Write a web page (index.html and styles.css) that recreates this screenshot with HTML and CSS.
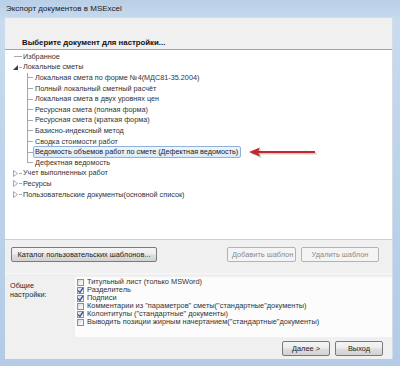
FILE: index.html
```html
<!DOCTYPE html>
<html lang="ru">
<head>
<meta charset="utf-8">
<title>Экспорт документов в MSExcel</title>
<link rel="stylesheet" href="styles.css">
</head>
<body>
<div class="window">
  <div class="titlebar">Экспорт документов в MSExcel</div>
  <div class="client">
    <div class="heading">Выберите документ для настройки...</div>
    <div class="tree">
      <div class="row top"><span class="twisty leaf"></span><span class="label">Избранное</span></div>
      <div class="row top"><span class="twisty"><svg class="tri" width="5" height="5" viewBox="0 0 5 5"><polygon points="5,0 5,5 0,5" fill="#3c3c3c"/></svg></span><span class="label">Локальные сметы</span></div>
      <div class="row child"><span class="conn"></span><span class="label">Локальная смета по форме №4(МДС81-35.2004)</span></div>
      <div class="row child"><span class="conn"></span><span class="label">Полный локальный сметный расчёт</span></div>
      <div class="row child"><span class="conn"></span><span class="label">Локальная смета в двух уровнях цен</span></div>
      <div class="row child"><span class="conn"></span><span class="label">Ресурсная смета (полная форма)</span></div>
      <div class="row child"><span class="conn"></span><span class="label">Ресурсная смета (краткая форма)</span></div>
      <div class="row child"><span class="conn"></span><span class="label">Базисно-индексный метод</span></div>
      <div class="row child"><span class="conn"></span><span class="label">Сводка стоимости работ</span></div>
      <div class="row child"><span class="conn"></span><span class="label selected">Ведомость объемов работ по смете (Дефектная ведомость)</span></div>
      <div class="row child"><span class="conn last"></span><span class="label">Дефектная ведомость</span></div>
      <div class="row top"><span class="twisty"><svg class="tri" width="5" height="7" viewBox="0 0 5 7"><polygon points="0.5,0.5 4.5,3.5 0.5,6.5" fill="#fff" stroke="#a6a6a6" stroke-width="1"/></svg></span><span class="label">Учет выполненных работ</span></div>
      <div class="row top"><span class="twisty"><svg class="tri" width="5" height="7" viewBox="0 0 5 7"><polygon points="0.5,0.5 4.5,3.5 0.5,6.5" fill="#fff" stroke="#a6a6a6" stroke-width="1"/></svg></span><span class="label">Ресурсы</span></div>
      <div class="row top"><span class="twisty"><svg class="tri" width="5" height="7" viewBox="0 0 5 7"><polygon points="0.5,0.5 4.5,3.5 0.5,6.5" fill="#fff" stroke="#a6a6a6" stroke-width="1"/></svg></span><span class="label">Пользовательские документы(основной список)</span></div>
      <svg class="arrow" width="72" height="16" viewBox="0 0 72 16">
        <g transform="translate(1.5,1.5)">
          <line x1="8" y1="6" x2="66" y2="6" stroke="#9a9a9a" stroke-width="2" stroke-opacity="0.5"/>
          <polygon points="0,6 11,1.5 9,6 11,10.5" fill="#9a9a9a" fill-opacity="0.5"/>
        </g>
        <line x1="8" y1="6" x2="66" y2="6" stroke="#c1272d" stroke-width="2"/>
        <polygon points="0,6 11,1.5 9,6 11,10.5" fill="#c1272d"/>
      </svg>
    </div>
    <div class="btnrow">
      <button class="btn catalog">Каталог пользовательских шаблонов...</button>
      <span class="spacer"></span>
      <button class="btn disabled add">Добавить шаблон</button>
      <button class="btn disabled del">Удалить шаблон</button>
    </div>
    <div class="settings">
      <div class="settings-label">Общие<br>настройки:</div>
      <div class="checklist">
        <div class="check"><span class="box"></span><span>Титульный лист (только MSWord)</span></div>
        <div class="check"><span class="box"><svg width="7" height="7" viewBox="0 0 7 7"><path d="M1 3.5 L3 5.5 L6 1" fill="none" stroke="#3d5a99" stroke-width="1.4"/></svg></span><span>Разделитель</span></div>
        <div class="check"><span class="box"><svg width="7" height="7" viewBox="0 0 7 7"><path d="M1 3.5 L3 5.5 L6 1" fill="none" stroke="#3d5a99" stroke-width="1.4"/></svg></span><span>Подписи</span></div>
        <div class="check"><span class="box"></span><span>Комментарии из "параметров" сметы("стандартные"документы)</span></div>
        <div class="check"><span class="box"><svg width="7" height="7" viewBox="0 0 7 7"><path d="M1 3.5 L3 5.5 L6 1" fill="none" stroke="#3d5a99" stroke-width="1.4"/></svg></span><span>Колонтитулы ("стандартные" документы)</span></div>
        <div class="check"><span class="box"></span><span>Выводить позиции жирным начертанием("стандартные"документы)</span></div>
      </div>
    </div>
    <div class="footer">
      <button class="btn foot">Далее &gt;</button>
      <button class="btn foot">Выход</button>
    </div>
  </div>
</div>
</body>
</html>
```

FILE: styles.css
```css
* { box-sizing: border-box; }

html, body {
  margin: 0;
  padding: 0;
  background: #ffffff;
}

body {
  font-family: "Liberation Sans", Arial, sans-serif;
  font-size: 7.6px;
  color: #2a2a2a;
}

.window {
  width: 400px;
  height: 366px;
  display: flex;
  flex-direction: column;
  padding: 0 7px 7px 5px;
  background: linear-gradient(to bottom, #b9cfe6 0%, #c9dcef 6%, #bed4ea 40%, #b3cbe6 100%);
}

.titlebar {
  height: 17px;
  line-height: 17px;
  padding-left: 1px;
  font-size: 8px;
  color: #1b1b1b;
  white-space: nowrap;
}

.client {
  flex: 1;
  display: flex;
  flex-direction: column;
  background: #f0f0f0;
  border-top: 1px solid #d2dde9;
  border-right: 1px solid #d2dde9;
}

.heading {
  height: 31px;
  display: flex;
  align-items: flex-end;
  padding: 0 0 1px 17px;
  font-weight: bold;
  font-size: 7.8px;
  line-height: 10px;
  color: #111;
}

.tree {
  position: relative;
  height: 191px;
  background: #ffffff;
  border-top: 1px solid #a5a5a5;
  border-bottom: 1px solid #cfcfcf;
  padding-top: 1.5px;
  font-size: 7.25px;
  color: #333;
}

.row {
  height: 10.6px;
  display: flex;
  align-items: stretch;
  white-space: nowrap;
}

.row.top { padding-left: 8px; }

.twisty {
  width: 9px;
  display: flex;
  align-items: center;
  background: linear-gradient(#a8a8a8, #a8a8a8) right center / 3px 1px no-repeat;
}

.twisty.leaf {
  background: linear-gradient(#a8a8a8, #a8a8a8) 1px center / 8px 1px no-repeat;
}

.tri { display: block; }

.label {
  display: flex;
  align-items: center;
  margin-left: 1px;
  line-height: 10px;
}

.row.child { padding-left: 22px; }

.conn {
  width: 6px;
  background:
    linear-gradient(#a8a8a8, #a8a8a8) left top / 1px 100% no-repeat,
    linear-gradient(#a8a8a8, #a8a8a8) left center / 6px 1px no-repeat;
}

.conn.last {
  background:
    linear-gradient(#a8a8a8, #a8a8a8) left top / 1px 50% no-repeat,
    linear-gradient(#a8a8a8, #a8a8a8) left center / 6px 1px no-repeat;
}

.row.child .label {
  margin-left: 0;
  padding: 0 2px 0 1px;
  border: 1px solid transparent;
  margin-top: -1px;
  margin-bottom: -1px;
}

.row.child .label.selected {
  background: linear-gradient(to bottom, #eef5fd, #dbeafb);
  border-color: #8fb2dc;
  border-radius: 2px;
  color: #1a1a1a;
}

.arrow {
  position: absolute;
  left: 244px;
  top: 96px;
}

.btnrow {
  height: 33px;
  display: flex;
  align-items: flex-start;
  padding: 7px 13px 0 6px;
  gap: 5px;
}

.spacer { flex: 1; }

.btn {
  height: 15px;
  padding: 0 4px;
  font-family: "Liberation Sans", Arial, sans-serif;
  font-size: 7.4px;
  color: #1e1e1e;
  border: 1px solid #7a7a7a;
  border-radius: 2px;
  background: linear-gradient(to bottom, #f4f4f4 0%, #ececec 48%, #dedede 52%, #d2d2d2 100%);
  white-space: nowrap;
  line-height: 13px;
}

.btn.catalog { width: 146px; }

.btn.disabled {
  color: #8a8a8a;
  border-color: #b0b4b8;
  background: #f4f4f4;
}

.btn.add { width: 69px; }
.btn.del { width: 78px; }

.settings {
  height: 64px;
  display: flex;
  padding-top: 3px;
  border-top: 1px solid #f8f8f8;
}

.settings-label {
  width: 70px;
  padding: 4px 0 0 5px;
  line-height: 9px;
  color: #2a2a2a;
  font-size: 7.3px;
}

.checklist {
  flex: 1;
  background: #fcfcfc;
  padding: 1px 0 0 2px;
}

.check {
  height: 8px;
  display: flex;
  align-items: center;
  gap: 3px;
  white-space: nowrap;
  line-height: 8px;
  font-size: 7.4px;
  color: #333;
}

.box {
  width: 7px;
  height: 7px;
  flex: none;
  border: 1px solid #8e8f8f;
  background: linear-gradient(135deg, #dcdcdc, #ffffff);
  position: relative;
}

.box svg {
  position: absolute;
  left: -1px;
  top: -1px;
}

.footer {
  flex: 1;
  display: flex;
  justify-content: flex-end;
  align-items: center;
  gap: 5px;
  padding: 0 9px 0 0;
}

.btn.foot { width: 48px; }
```
